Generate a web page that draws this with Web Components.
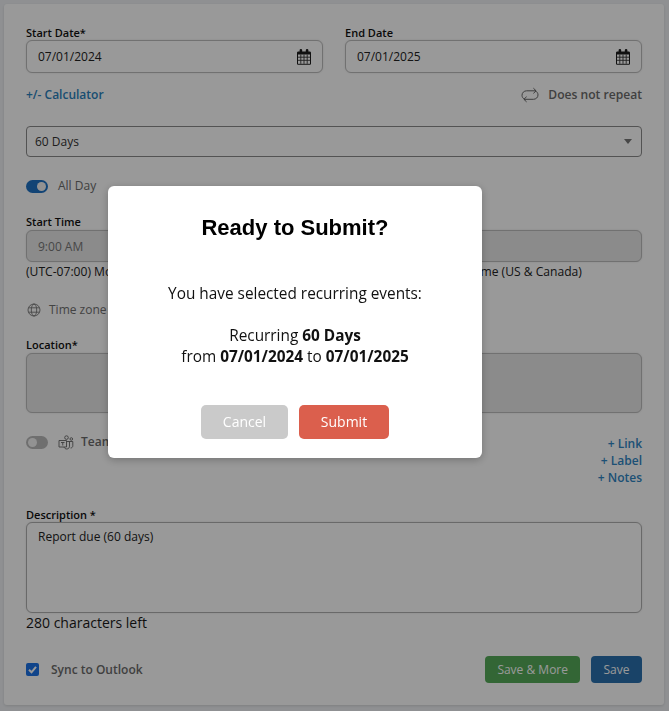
<!DOCTYPE html>
<html lang="en">

<head>
    <title>Event form</title>
    <meta charset="utf-8">
    <meta name="viewport" content="width=device-width, initial-scale=1" />

    <style>
        *,
        *::after,
        *::before {
            margin: 0;
            box-sizing: border-box;
        }

        html,
        body {
            height: 100%;
            overflow: hidden;
        }

        body {
            background: #eff1f4;
            font-family: "Open Sans", "Liberation Sans", sans-serif;
            font-size: 12px;
            color: #000;
            padding: 4px 5px 6px 4px;
        }
    </style>

    <template id="form-card">
        <style>
            :host {
                display: block;
                height: 701px;
                background: #fff;
                border-radius: 3px;
                box-shadow: 0 1px 3px rgba(0, 0, 0, .12);
                padding: 22px 22px 0;
            }
        </style>
        <slot></slot>
    </template>

    <template id="two-cols">
        <style>
            :host {
                display: grid;
                grid-template-columns: 297px 297px;
                column-gap: 22px;
            }
        </style>
        <slot></slot>
    </template>

    <template id="form-field">
        <style>
            :host {
                display: block;
            }

            label {
                display: block;
                min-height: 14px;
                font-size: 11px;
                font-weight: 600;
                line-height: 14px;
                color: #111;
            }
        </style>
        <label id="l"></label>
        <slot></slot>
    </template>

    <template id="text-box">
        <style>
            :host {
                display: flex;
                align-items: center;
                justify-content: space-between;
                height: 33px;
                padding: 0 11px;
                border: 1px solid #bcbcbc;
                border-radius: 6px;
                background: #fff;
                box-shadow: 0 0 2px rgba(0, 0, 0, .12);
                font-size: 12px;
                color: #222;
            }

            :host([disabled]) {
                background: #e8e8e8;
                color: #777;
            }

            :host([tall]) {
                height: 60px;
            }

            :host([area]) {
                height: 91px;
                align-items: flex-start;
                padding-top: 5px;
                border-color: #b0b0b0;
                background: #fff;
            }
        </style>
        <slot></slot>
    </template>

    <template id="cal-icon">
        <style>
            :host {
                display: block;
                width: 14px;
                height: 16px;
            }

            svg {
                display: block;
            }
        </style>
        <svg width="14" height="16" viewBox="0 0 14 16">
            <path fill="#1d1d1d" d="M1.300 2.400H2.600V1.300a1.300 1.300 0 0 1 2.600 0v1.100h3.600V1.300a1.300 1.300 0 0 1 2.600 0v1.100h1.300c.7 0 1.300.6 1.300 1.300v10.800c0 .7-.6 1.300-1.300 1.300H1.300C.6 15.800 0 15.200 0 14.500V3.700c0-.7.6-1.300 1.300-1.300z" />
            <path fill="#fff" d="M1 5.500h12v9.300H1z" />
            <path fill="none" stroke="#333" stroke-width=".9" d="M1 8.200h12M1 11.300h12M3.800 5.500v9.300M7 5.500v9.300M10.200 5.500v9.300" />
        </svg>
    </template>

    <template id="select-box">
        <style>
            :host {
                display: flex;
                align-items: center;
                justify-content: space-between;
                height: 31px;
                padding: 0 9px 0 8px;
                border: 1px solid #8b8b8b;
                border-radius: 4px;
                background: #fff;
                font-size: 12px;
                color: #333;
            }

            i {
                width: 0;
                height: 0;
                border-left: 4px solid transparent;
                border-right: 4px solid transparent;
                border-top: 5px solid #777;
            }
        </style>
        <slot></slot>
        <i></i>
    </template>

    <template id="toggle-switch">
        <style>
            :host {
                display: block;
                flex: none;
                width: 22px;
                height: 13px;
                border-radius: 7px;
                background: #b9b9b9;
                position: relative;
            }

            :host([on]) {
                background: #1f72c4;
            }

            i {
                position: absolute;
                left: 2px;
                top: 2px;
                width: 9px;
                height: 9px;
                border-radius: 50%;
                background: #f4f4f4;
            }

            :host([on]) i {
                left: 11px;
            }
        </style>
        <i></i>
    </template>

    <template id="icon-row">
        <style>
            :host {
                display: flex;
                align-items: center;
                font-size: 12px;
                font-weight: 600;
                color: #6b6b6b;
                line-height: 16px;
            }
        </style>
        <slot></slot>
    </template>

    <template id="text-link">
        <style>
            :host {
                display: block;
                font-size: 12px;
                font-weight: 600;
                line-height: 17px;
                color: #2b82bd;
            }
        </style>
        <slot></slot>
    </template>

    <template id="tick-box">
        <style>
            :host {
                display: block;
                flex: none;
                width: 13px;
                height: 13px;
                border-radius: 2px;
                background: #1c72e6;
            }

            svg {
                display: block;
            }
        </style>
        <svg width="13" height="13" viewBox="0 0 13 13">
            <path fill="none" stroke="#fff" stroke-width="2" d="M3 6.800l2.500 2.500L10 3.800" />
        </svg>
    </template>

    <template id="action-button">
        <style>
            :host {
                display: flex;
                align-items: center;
                justify-content: center;
                height: 27px;
                padding: 0 12px;
                border-radius: 4px;
                background: #55ab59;
                color: #fff;
                font-size: 12px;
            }

            :host([blue]) {
                width: 51px;
                padding: 0;
                background: #2a70ad;
            }
        </style>
        <slot></slot>
    </template>

    <template id="modal-dialog">
        <style>
            :host {
                position: fixed;
                inset: 0;
                display: block;
                padding: 186px 0 0 108px;
                background: rgba(0, 0, 0, .4);
            }

            section {
                box-sizing: border-box;
                width: 374px;
                height: 272px;
                background: #fff;
                border-radius: 6px;
                box-shadow: 0 2px 8px rgba(0, 0, 0, .25);
                padding: 28px 20px 0;
                text-align: center;
                font-family: "Open Sans", sans-serif;
                font-size: 15.360px;
                line-height: 21px;
                color: #111;
            }

            h2 {
                margin: 0 0 42px;
                font-family: "Liberation Sans", Arial, sans-serif;
                font-size: 22px;
                line-height: 27px;
                font-weight: 700;
                color: #000;
            }

            footer {
                display: flex;
                justify-content: center;
                gap: 11px;
                margin-top: 38px;
            }
        </style>
        <section>
            <h2 id="t"></h2>
            <slot></slot>
            <footer>
                <slot name="actions"></slot>
            </footer>
        </section>
    </template>

    <template id="modal-button">
        <style>
            :host {
                display: flex;
                align-items: center;
                justify-content: center;
                height: 34px;
                width: 87px;
                padding-bottom: 1px;
                border-radius: 5px;
                background: #cacaca;
                color: #fff;
                font-size: 14px;
            }

            :host([danger]) {
                width: 90px;
                background: #db5f4d;
            }
        </style>
        <slot></slot>
    </template>

    <script>
        document
            .querySelectorAll('template')
            .forEach(element => {

                customElements.define(element.id, class extends HTMLElement {

                    constructor() {
                        super()
                            .attachShadow({ mode: "open" })
                            .appendChild(element.content.cloneNode(true));
                    }

                    connectedCallback() {
                        const l = this.shadowRoot.getElementById('l');
                        if (l) l.textContent = this.getAttribute('label');
                        const t = this.shadowRoot.getElementById('t');
                        if (t) t.textContent = this.getAttribute('heading');
                    }
                })
            })
    </script>
</head>

<body>
    <form-card>
        <two-cols>
            <form-field label="Start Date*">
                <text-box>07/01/2024<cal-icon></cal-icon></text-box>
            </form-field>
            <form-field label="End Date">
                <text-box>07/01/2025<cal-icon></cal-icon></text-box>
            </form-field>
        </two-cols>

        <div style="display:flex;justify-content:space-between;align-items:center;margin-top:12px;height:18px">
            <text-link>+/- Calculator</text-link>
            <icon-row style="padding-top:1px;font-size:12.1px">
                <svg width="18" height="16" viewBox="0 0 18 16" style="margin-right:9px" fill="none" stroke="#666" stroke-width="1">
                    <path d="M3.600 12.300C2 11.500 1 10 1 8.300 1 5.800 3 3.800 5.600 3.800h9.400M12.400 1.200L15.100 3.800 12.400 6.400" />
                    <path d="M14.400 3.900C16 4.700 17 6.200 17 7.900 17 10.400 15 12.300 12.400 12.300H3M5.600 9.700L2.900 12.300 5.600 14.900" />
                </svg>
                Does not repeat
            </icon-row>
        </div>

        <select-box style="margin-top:23px">60 Days</select-box>

        <icon-row style="margin-top:21px;gap:10px;font-weight:400">
            <toggle-switch on></toggle-switch>All Day
        </icon-row>

        <two-cols style="margin-top:21px">
            <form-field label="Start Time">
                <text-box disabled style="margin-top:1px;height:32px">9:00 AM</text-box>
                <div style="line-height:17px;margin-top:1px;color:#222;font-size:12.1px">(UTC-07:00) Mountain Time (US &amp; Canada)</div>
            </form-field>
            <form-field label="">
                <text-box disabled style="margin-top:1px;height:32px"></text-box>
                <div style="line-height:17px;margin-top:1px;color:#222;font-size:12.1px">(UTC-07:00) Mountain Time (US &amp; Canada)</div>
            </form-field>
        </two-cols>

        <icon-row style="margin-top:22px;font-weight:400;color:#707070">
            <svg width="14" height="14" viewBox="0 0 14 14" style="margin:0 8px 0 1px" fill="none" stroke="#777" stroke-width=".9">
                <circle cx="7" cy="7" r="6" />
                <ellipse cx="7" cy="7" rx="2.700" ry="6" />
                <path d="M1.500 4.800h11M1.500 9.200h11" />
            </svg>
            Time zone
        </icon-row>

        <form-field label="Location*" style="margin-top:20px">
            <text-box disabled tall style="margin-top:1px"></text-box>
        </form-field>

        <div style="display:flex;justify-content:space-between;align-items:flex-start;margin-top:21px">
            <icon-row>
                <toggle-switch></toggle-switch>
                <svg width="16" height="15" viewBox="0 0 16 15" style="margin:0 7px 0 10px" fill="none" stroke="#666" stroke-width=".9">
                    <circle cx="8.500" cy="2.600" r="1.800" />
                    <circle cx="13.300" cy="4" r="1.300" />
                    <path d="M1 5.500h7.500v6.500H1zM3 7.500h3.500M4.750 7.500v3M8.500 6.500h6.300v4.300c0 1.300-1 2.200-2.200 2.200M6 12c.4 1.200 1.400 2 2.800 2 1.600 0 2.700-1.200 2.700-2.800V6.500" />
                </svg>
                Teams Meeting
            </icon-row>
            <div style="text-align:right;padding-top:1px">
                <text-link style="color:#2f86c4">+ Link</text-link>
                <text-link style="color:#2f86c4">+ Label</text-link>
                <text-link style="color:#2f86c4">+ Notes</text-link>
            </div>
        </div>

        <form-field label="Description *" style="margin-top:22px">
            <text-box area style="line-height:17px">Report due (60 days)</text-box>
        </form-field>
        <div style="font-size:14px;line-height:20px;color:#1a1a1a">280 characters left</div>

        <div style="display:flex;justify-content:space-between;align-items:center;margin-top:23px">
            <icon-row style="gap:12px">
                <tick-box></tick-box>Sync to Outlook
            </icon-row>
            <div style="display:flex;gap:11px">
                <action-button>Save &amp; More</action-button>
                <action-button blue>Save</action-button>
            </div>
        </div>
    </form-card>

    <modal-dialog heading="Ready to Submit?">
        <p>You have selected recurring events:</p>
        <p style="margin:21px 0 0">Recurring <b>60 Days</b><br>from <b>07/01/2024</b> to <b>07/01/2025</b></p>
        <modal-button slot="actions">Cancel</modal-button>
        <modal-button slot="actions" danger>Submit</modal-button>
    </modal-dialog>
</body>

</html>
